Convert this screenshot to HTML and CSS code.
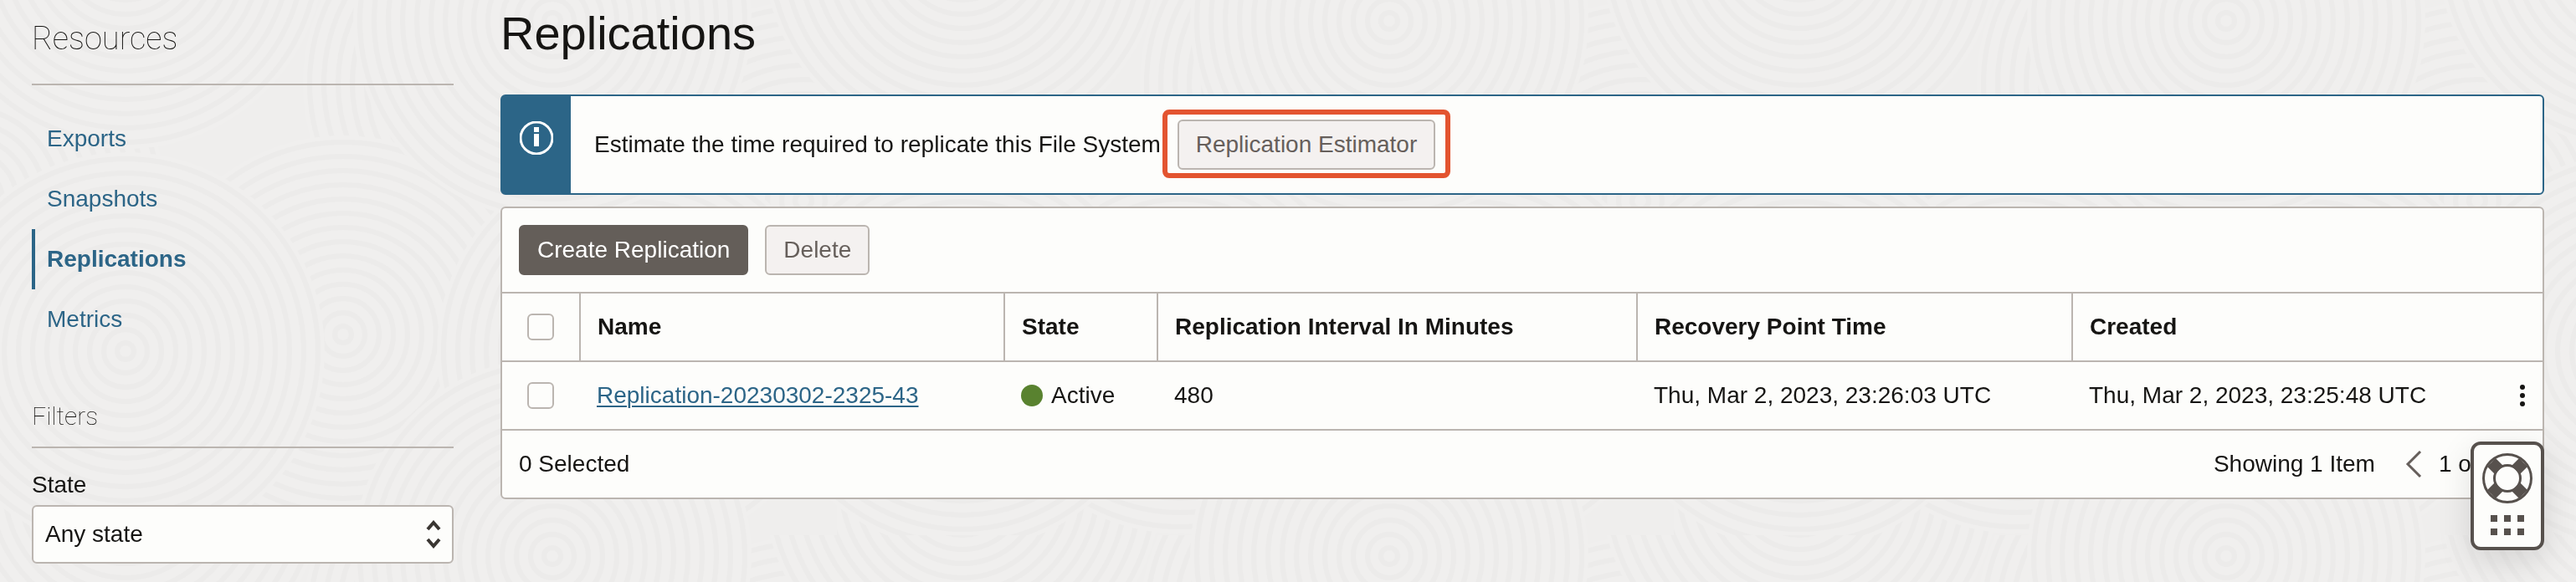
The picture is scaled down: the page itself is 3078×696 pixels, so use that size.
FILE: index.html
```html
<!DOCTYPE html>
<html lang="en">
<head>
<meta charset="utf-8">
<title>Replications</title>
<link rel="stylesheet" href="styles.css">
</head>
<body>
<svg class="backdrop" aria-hidden="true">
  <defs>
    <g id="rings">
      <circle r="238" class="disc"/>
      <circle r="230"/><circle r="213"/><circle r="196"/><circle r="179"/><circle r="162"/><circle r="145"/><circle r="128"/><circle r="111"/><circle r="94"/><circle r="77"/><circle r="60"/><circle r="43"/><circle r="26"/><circle r="10"/>
    </g>
    <pattern id="grain" width="1000" height="640" patternUnits="userSpaceOnUse">
      <g class="grain">
        <use href="#rings" x="600" y="100"/>
        <use href="#rings" x="-40" y="240"/><use href="#rings" x="960" y="240"/>
        <use href="#rings" x="150" y="-60"/><use href="#rings" x="150" y="580"/><use href="#rings" x="1150" y="-60"/>
        <use href="#rings" x="410" y="400"/>
        <use href="#rings" x="760" y="420"/>
        <use href="#rings" x="150" y="420"/><use href="#rings" x="1150" y="420"/>
        <use href="#rings" x="660" y="25"/><use href="#rings" x="660" y="665"/>
      </g>
    </pattern>
  </defs>
  <rect width="100%" height="100%" fill="url(#grain)"/>
</svg>

<div class="page">
  <aside class="sidebar">
    <h2 class="side-title">Resources</h2>
    <nav class="side-nav">
      <a class="side-link" href="#exports">Exports</a>
      <a class="side-link" href="#snapshots">Snapshots</a>
      <a class="side-link side-link-active" href="#replications" aria-current="page">Replications</a>
      <a class="side-link" href="#metrics">Metrics</a>
    </nav>
    <h3 class="filter-title">Filters</h3>
    <label class="field-label" for="state">State</label>
    <div class="select-box">
      <select class="select" id="state"><option>Any state</option></select>
      <svg class="select-arrows" viewBox="0 0 20 34" aria-hidden="true"><path d="M3 11l7-8 7 8M3 23l7 8 7-8"/></svg>
    </div>
  </aside>

  <main class="main">
    <h1 class="title">Replications</h1>

    <section class="banner">
      <div class="banner-mark">
        <svg class="info-icon" viewBox="0 0 40 40" aria-hidden="true"><circle cx="20" cy="20" r="19"/><path d="M17 7h6v6h-6zM17 15h6v15h-6z"/></svg>
      </div>
      <div class="banner-body">
        <span>Estimate the time required to replicate this File System:</span>
        <span class="highlight"><button class="btn" type="button">Replication Estimator</button></span>
      </div>
    </section>

    <section class="card">
      <div class="toolbar">
        <button class="btn btn-primary" type="button">Create Replication</button>
        <button class="btn" type="button">Delete</button>
      </div>
      <table class="table">
        <colgroup><col class="c-check"><col class="c-name"><col class="c-state"><col class="c-interval"><col class="c-point"><col></colgroup>
        <thead>
          <tr>
            <th class="check-cell"><input class="check" type="checkbox" aria-label="Select all"></th>
            <th>Name</th><th>State</th><th>Replication Interval In Minutes</th><th>Recovery Point Time</th><th>Created</th>
          </tr>
        </thead>
        <tbody>
          <tr>
            <td class="check-cell"><input class="check" type="checkbox" aria-label="Select Replication-20230302-2325-43"></td>
            <td><a class="link" href="#replication">Replication-20230302-2325-43</a></td>
            <td><span class="status"><i class="dot"></i>Active</span></td>
            <td>480</td>
            <td>Thu, Mar 2, 2023, 23:26:03 UTC</td>
            <td><div class="created">Thu, Mar 2, 2023, 23:25:48 UTC
              <button class="icon-btn" type="button" aria-label="Actions"><svg class="kebab" viewBox="0 0 8 28"><circle cx="4" cy="4" r="3"/><circle cx="4" cy="14" r="3"/><circle cx="4" cy="24" r="3"/></svg></button></div></td>
          </tr>
        </tbody>
      </table>
      <footer class="footer">
        <span>0 Selected</span>
        <div class="pager">
          <span>Showing 1 Item</span>
          <button class="icon-btn" type="button" aria-label="Previous page"><svg class="chevron" viewBox="0 0 20 32"><path d="M18 1L3 16l15 15"/></svg></button>
          <span class="page-count">1 of 1</span>
        </div>
      </footer>
    </section>
  </main>
</div>

<button class="support" type="button" aria-label="Support">
  <svg class="lifebuoy" viewBox="0 0 60 60" aria-hidden="true">
    <circle class="ring" cx="30" cy="30" r="28.5"/>
    <circle class="ring" cx="30" cy="30" r="15.5"/>
    <path d="M6 16L16 6L25 15L15 25zM54 16L44 6L35 15L45 25zM6 44L16 54L25 45L15 35zM54 44L44 54L35 45L45 35z"/>
  </svg>
  <svg class="grip" viewBox="0 0 40 24" aria-hidden="true"><path d="M0 0h8v8H0zM16 0h8v8h-8zM32 0h8v8h-8zM0 16h8v8H0zM16 16h8v8h-8zM32 16h8v8h-8z"/></svg>
</button>
</body>
</html>
```
FILE: styles.css
```css
* { box-sizing: border-box; }

body {
  margin: 0;
  background: #efeeed;
  color: #161513;
  font-family: "Liberation Sans", Arial, sans-serif;
  font-size: 28px;
  line-height: 32px;
}

button, select { font: inherit; color: inherit; }

.backdrop {
  position: fixed;
  inset: 0;
  z-index: -1;
  width: 100%;
  height: 100%;
}
.grain { fill: none; stroke: #ecebea; stroke-width: 6px; }
.disc { fill: #f0efee; stroke: none; }

.page {
  display: grid;
  grid-template-columns: 504px 1fr;
  gap: 56px;
  padding: 0 38px;
}

/* Sidebar */
.side-title, .filter-title {
  margin: 0;
  border-bottom: 2px solid #bbb5b0;
  font-family: Roboto, "Liberation Sans", sans-serif;
  font-weight: 100;
}
.side-title { padding: 22px 0 30px; font-size: 38px; line-height: 48px; }
.side-nav { display: flex; flex-direction: column; padding: 28px 0 40px; }
.side-link {
  padding: 20px 0 20px 14px;
  border-left: 4px solid transparent;
  color: #2c6587;
  text-decoration: none;
}
.side-link-active { border-color: #2c6587; font-weight: 700; }
.filter-title { padding: 20px 0 16px; font-size: 30px; line-height: 40px; }
.field-label { display: block; padding: 28px 0 8px; }
.select-box { display: grid; align-items: center; }
.select-box > * { grid-area: 1 / 1; }
.select {
  appearance: none;
  width: 100%;
  height: 70px;
  padding: 0 14px;
  border: 2px solid #bbb5b0;
  border-radius: 6px;
  background: #fdfdfb;
}
.select-arrows {
  justify-self: end;
  width: 20px;
  height: 34px;
  margin-right: 14px;
  fill: none;
  stroke: #3a3632;
  stroke-width: 4px;
  pointer-events: none;
}

/* Main column */
.title { margin: 0; padding: 8px 0 41px; font-size: 56px; font-weight: 400; line-height: 64px; }

.banner {
  display: flex;
  min-height: 120px;
  border: 2px solid #2c6587;
  border-radius: 6px;
  background: #fdfdfb;
}
.banner-mark { width: 82px; padding: 30px 0 0 21px; background: #2c6587; }
.info-icon { display: block; width: 40px; height: 40px; fill: #fff; }
.info-icon circle { fill: none; stroke: #fff; stroke-width: 3px; }
.banner-body { display: flex; align-items: center; gap: 12px; padding: 0 28px; }

.highlight { position: relative; }
.highlight::after {
  content: "";
  position: absolute;
  inset: -12px -18px -10px;
  border: 6px solid #e35430;
  border-radius: 8px;
  pointer-events: none;
}

.btn {
  display: block;
  height: 60px;
  padding: 0 20px;
  border: 2px solid #bbb5b0;
  border-radius: 6px;
  background: #f4f1f0;
  color: #665f5b;
}
.btn-primary { border-color: #645e59; background: #645e59; color: #fff; }

.card { margin-top: 14px; border: 2px solid #bbb5b0; border-radius: 6px; background: #fdfdfb; }
.toolbar { display: flex; gap: 20px; padding: 20px; }

.table { width: 100%; border-collapse: separate; border-spacing: 0; table-layout: fixed; }
.c-check { width: 92px; }
.c-name { width: 507px; }
.c-state { width: 183px; }
.c-interval { width: 573px; }
.c-point { width: 520px; }
th, td { height: 82px; padding: 0 20px; border-top: 2px solid #bbb5b0; text-align: left; }
th + th { border-left: 2px solid #bbb5b0; }
td + td { padding: 0 20px 0 21px; }
th.check-cell, td.check-cell { padding: 0 0 0 30px; }
.check {
  appearance: none;
  display: block;
  width: 32px;
  height: 32px;
  margin: 0;
  border: 2px solid #bbb5b0;
  border-radius: 6px;
}
.link { color: #2c6587; text-decoration-thickness: 2px; text-underline-offset: 3px; }
.status { display: flex; align-items: center; gap: 10px; }
.dot { width: 26px; height: 26px; border-radius: 50%; background: #59822f; }
.created { display: flex; align-items: center; justify-content: space-between; }
.icon-btn { padding: 0; border: 0; background: none; }
.kebab { display: block; width: 8px; height: 28px; fill: #161513; }

.footer {
  display: flex;
  align-items: center;
  justify-content: space-between;
  height: 82px;
  padding: 0 54px 0 20px;
  border-top: 2px solid #bbb5b0;
}
.pager { display: flex; align-items: center; }
.pager .icon-btn { margin: 0 20px 0 36px; }
.chevron { display: block; width: 20px; height: 32px; fill: none; stroke: #665f5b; stroke-width: 3px; }

/* Floating help button */
.support {
  position: fixed;
  right: 38px;
  bottom: 38px;
  display: flex;
  flex-direction: column;
  align-items: center;
  gap: 14px;
  width: 88px;
  padding: 10px 0 14px;
  border: 4px solid #57514d;
  border-radius: 12px;
  background: #fdfdfb;
  box-shadow: 0 12px 40px rgba(0, 0, 0, 0.12);
}
.lifebuoy { width: 60px; height: 60px; fill: #57514d; }
.ring { fill: none; stroke: #57514d; stroke-width: 3px; }
.grip { width: 40px; height: 24px; fill: #57514d; }
```
